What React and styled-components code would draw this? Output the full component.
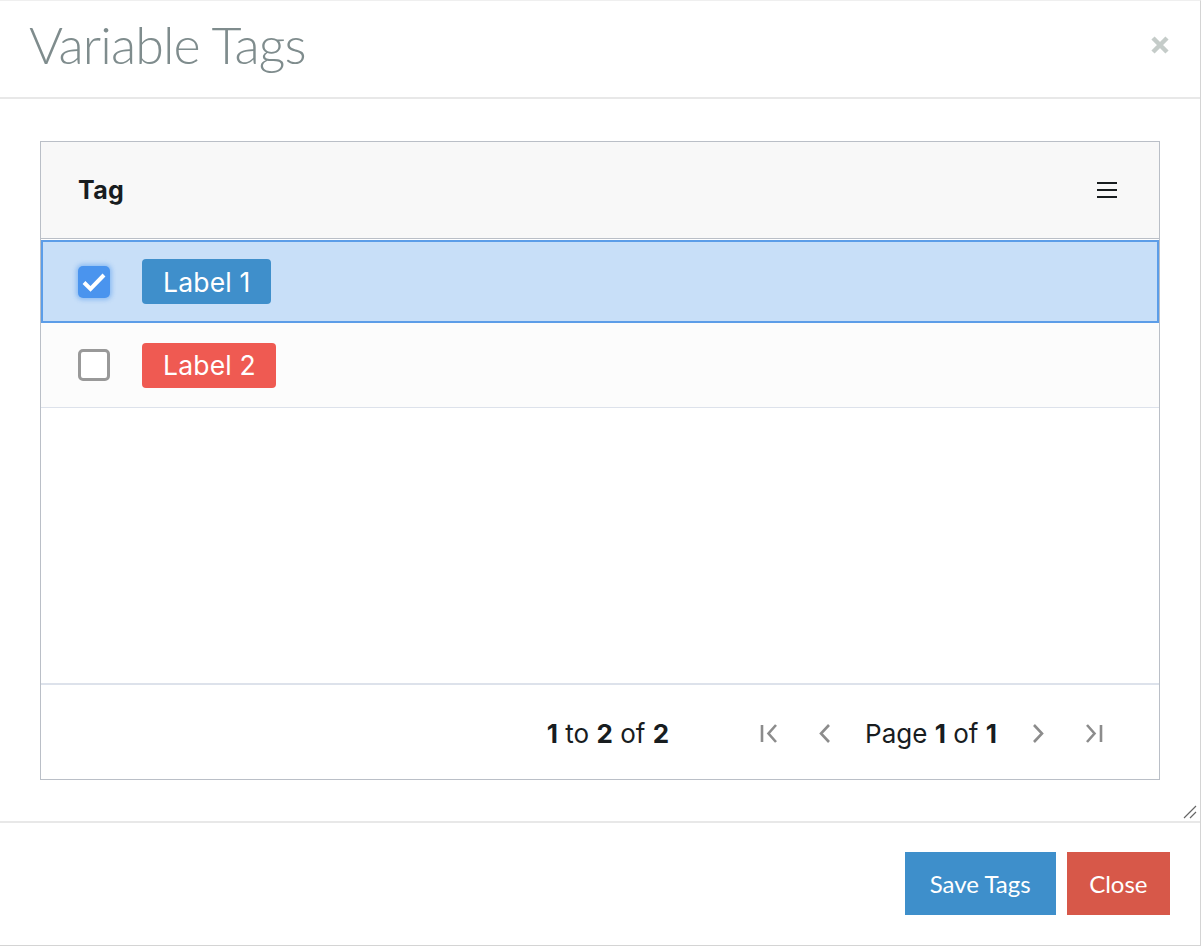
import React, { useState } from "react";
import styled, { createGlobalStyle } from "styled-components";

const GlobalStyle = createGlobalStyle`
  html, body {
    margin: 0;
    padding: 0;
    background: #ffffff;
  }
  * {
    box-sizing: border-box;
  }
`;

const Modal = styled.div`
  width: 1202px;
  height: 946px;
  margin-left: -1px;
  background: #ffffff;
  border: 1px solid #d4d4d4;
  border-top-color: #efefef;
  display: flex;
  flex-direction: column;
`;

const Header = styled.div`
  height: 98px;
  flex: none;
  display: flex;
  align-items: center;
  justify-content: space-between;
  padding: 0 30px 10px 29px;
  border-bottom: 2px solid #e8e8e8;
`;

const Title = styled.h4`
  margin: 0;
  font-family: Lato, "Open Sans", sans-serif;
  font-weight: 300;
  font-size: 52px;
  letter-spacing: -0.9px;
  color: #7f8c8d;
`;

const CloseX = styled.button`
  border: none;
  background: none;
  padding: 0;
  width: 20px;
  height: 20px;
  margin-top: 2px;
  cursor: pointer;
  display: flex;
`;

const Body = styled.div`
  flex: 1;
  position: relative;
  padding: 42px 40px 40px 40px;
`;

const Grid = styled.div`
  height: 639px;
  border: 1px solid #babfc7;
  display: flex;
  flex-direction: column;
  font-family: Inter, "Noto Sans", sans-serif;
  color: #181d1f;
`;

const HeaderRow = styled.div`
  height: 97px;
  flex: none;
  display: flex;
  align-items: center;
  justify-content: space-between;
  padding: 0 42px 0 37px;
  background: #f8f8f8;
  border-bottom: 1px solid #babfc7;
`;

const HeaderLabel = styled.span`
  font-size: 25px;
  font-weight: 700;
  letter-spacing: 0.3px;
`;

const Rows = styled.div`
  flex: 1;
  display: flex;
  flex-direction: column;
  padding-top: 1px;
`;

const Row = styled.div`
  height: ${(p) => (p.$selected ? "83px" : "85px")};
  display: flex;
  align-items: center;
  gap: 32px;
  background: ${(p) => (p.$selected ? "#c8dff8" : "#fcfcfc")};
  border: ${(p) => (p.$selected ? "2px solid #5c9de8" : "none")};
  border-bottom: ${(p) => (p.$selected ? "2px solid #5c9de8" : "1px solid #dde2eb")};
  padding-left: ${(p) => (p.$selected ? "35px" : "37px")};
`;

const Check = styled.span`
  width: 32px;
  height: 32px;
  border-radius: 5px;
  display: flex;
  align-items: center;
  justify-content: center;
  background: ${(p) => (p.$checked ? "#4a94ee" : "#ffffff")};
  border: ${(p) => (p.$checked ? "none" : "3px solid #999999")};
  box-shadow: ${(p) => (p.$checked ? "0 0 4px 2px rgba(74, 148, 238, 0.45)" : "none")};
  cursor: pointer;
`;

const Tag = styled.span`
  height: 45px;
  display: inline-flex;
  align-items: center;
  padding: 0 20px 0 21px;
  border-radius: 4px;
  background: ${(p) => p.$color};
  color: #ffffff;
  font-size: 26.5px;
  letter-spacing: 0.2px;
`;

const PagingPanel = styled.div`
  height: 96px;
  flex: none;
  display: flex;
  align-items: center;
  justify-content: flex-end;
  padding: 2px 50px 0 0;
  border-top: 2px solid #dde2eb;
  font-size: 26px;
`;

const Summary = styled.span`
  margin-right: 84px;
`;

const PageText = styled.span`
  margin: 0 24px;
`;

const PageButton = styled.span`
  width: 32px;
  height: 32px;
  display: flex;
  align-items: center;
  justify-content: center;
  margin-left: ${(p) => (p.$gap ? "24px" : "0")};
  cursor: pointer;
`;

const Grip = styled.svg`
  position: absolute;
  right: 3px;
  bottom: 2px;
`;

const Footer = styled.div`
  height: 124px;
  flex: none;
  display: flex;
  align-items: center;
  justify-content: flex-end;
  gap: 11px;
  padding: 0 30px 2px 0;
  border-top: 2px solid #e8e8e8;
`;

const Button = styled.button`
  height: 63px;
  padding: 0 ${(p) => p.$pad}px;
  border: none;
  border-radius: 0;
  background: ${(p) => p.$color};
  color: #ffffff;
  font-family: Lato, "Open Sans", sans-serif;
  font-size: 24px;
  cursor: pointer;
`;

const pageIcons = {
  first: "M3 3 V20 M17 3 L9.5 11.5 L17 20",
  prev: "M14 3 L6 11.5 L14 20",
  next: "M7 3 L15 11.5 L7 20",
  last: "M4 3 L11.5 11.5 L4 20 M18 3 V20",
};

const PageIcon = ({ name }) => (
  <svg width="21" height="23" viewBox="0 0 21 23" fill="none" stroke="#8c8c8c" strokeWidth="2.6">
    <path d={pageIcons[name]} />
  </svg>
);

const App = () => {
  const [checked, setChecked] = useState([true, false]);
  const tags = [
    { name: "Label 1", color: "#3f8fcb" },
    { name: "Label 2", color: "#ef5a52" },
  ];

  const toggle = (i) => setChecked((c) => c.map((v, j) => (j === i ? !v : v)));

  return (
    <>
      <GlobalStyle />
      <Modal>
        <Header>
          <Title>Variable Tags</Title>
          <CloseX aria-label="Close">
            <svg width="20" height="20" viewBox="0 0 20 20">
              <path d="M3 3 L17 17 M17 3 L3 17" stroke="#c5ccc9" strokeWidth="4.5" />
            </svg>
          </CloseX>
        </Header>
        <Body>
          <Grid>
            <HeaderRow>
              <HeaderLabel>Tag</HeaderLabel>
              <svg width="20" height="18" viewBox="0 0 20 18">
                <path d="M0 2 H20 M0 9 H20 M0 16 H20" stroke="#181d1f" strokeWidth="2" />
              </svg>
            </HeaderRow>
            <Rows>
              {tags.map((t, i) => (
                <Row key={t.name} $selected={checked[i]}>
                  <Check $checked={checked[i]} onClick={() => toggle(i)}>
                    {checked[i] && (
                      <svg width="26" height="22" viewBox="0 0 26 22">
                        <path d="M3 11.5 L9.5 18 L23 4" fill="none" stroke="#ffffff" strokeWidth="4" />
                      </svg>
                    )}
                  </Check>
                  <Tag $color={t.color}>{t.name}</Tag>
                </Row>
              ))}
            </Rows>
            <PagingPanel>
              <Summary>
                <b>1</b> to <b>2</b> of <b>2</b>
              </Summary>
              <PageButton>
                <PageIcon name="first" />
              </PageButton>
              <PageButton $gap>
                <PageIcon name="prev" />
              </PageButton>
              <PageText>
                Page <b>1</b> of <b>1</b>
              </PageText>
              <PageButton>
                <PageIcon name="next" />
              </PageButton>
              <PageButton $gap>
                <PageIcon name="last" />
              </PageButton>
            </PagingPanel>
          </Grid>
          <Grip width="14" height="14" viewBox="0 0 14 14">
            <path d="M1 13 L13 1 M7 13 L13 7" stroke="#666" strokeWidth="1.2" />
          </Grip>
        </Body>
        <Footer>
          <Button $color="#3e8fcb" $pad={25}>Save Tags</Button>
          <Button $color="#d75849" $pad={22.5}>Close</Button>
        </Footer>
      </Modal>
    </>
  );
};

export default App;
